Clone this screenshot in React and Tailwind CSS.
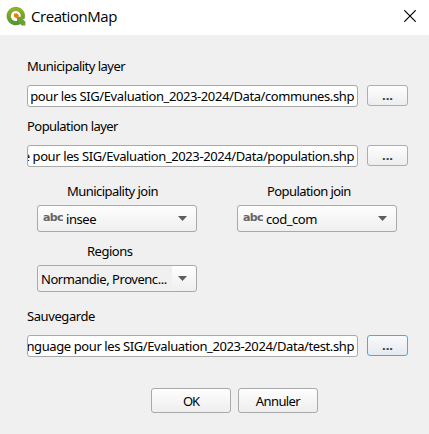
import React from "react";

function Logo() {
  return (
    <svg className="h-5 w-5 shrink-0" viewBox="0 0 20 20">
      <defs>
        <linearGradient id="leaf" x1="0" y1="0" x2="0" y2="1">
          <stop offset="0" stopColor="#93b023" />
          <stop offset="1" stopColor="#589632" />
        </linearGradient>
      </defs>
      <path d="M14.6 15.3 A7.1 7.1 0 1 1 16.9 9.6 Q16.9 11.2 16.2 12.6" fill="none" stroke="url(#leaf)" strokeWidth="4.3" />
      <path d="M11 10.8h3.4l5 5v3.6h-3.6l-4.8-4.9z" fill="#6d9f35" />
      <path d="M8 7.6h3.3l1.6 1.8v1.3h-1.6v1.6h-1.2L8 10.6z" fill="#ee7913" />
    </svg>
  );
}

function CloseIcon() {
  return (
    <svg className="h-3 w-3 text-black" viewBox="0 0 12 12" fill="none" stroke="currentColor" strokeWidth="1.2">
      <path d="M0.3 0.3l11.4 11.4M11.7 0.3L0.3 11.7" />
    </svg>
  );
}

function Label({ children, className = "" }) {
  return <div className={`h-4 whitespace-nowrap ${className}`}>{children}</div>;
}

function FileRow({ path, focused }) {
  return (
    <div className="flex items-start gap-[9px]">
      <div className="flex h-[22px] w-[331px] justify-end overflow-hidden rounded-[3px] border border-[#a9a9a9] bg-white pt-[2px] pr-[3px]">
        <span className="tracking-[-0.4px] whitespace-nowrap">{path}</span>
      </div>
      <button
        className={`flex h-[21px] w-[41px] justify-center rounded-[3px] border bg-linear-to-b pt-[1px] font-bold ${
          focused ? "border-[#4aa8f0] from-[#f9fafb] to-[#e5eaef]" : "border-[#adadad] from-[#fefefe] to-[#ededed]"
        }`}
      >
        <span className="text-[#303a42]">...</span>
      </button>
    </div>
  );
}

function Arrow() {
  return (
    <svg className="h-[5px] w-[9px]" viewBox="0 0 9 5">
      <path d="M0 0h9L4.5 5z" fill="#5c5c5c" />
    </svg>
  );
}

function Combo({ value, spacing }) {
  return (
    <div className="flex h-[27px] w-[160px] items-start rounded-[3px] border border-[#a9a9a9] bg-linear-to-b from-[#fefefe] to-[#efefef] pr-[9px] pl-[5px]">
      <span className="w-[23px] pt-[4px] font-['DejaVu_Sans'] text-[11px] leading-[16px] font-bold tracking-[-0.7px] text-[#666]">abc</span>
      <span className={`grow pt-[5px] ${spacing}`}>{value}</span>
      <div className="pt-[10px] leading-none"><Arrow /></div>
    </div>
  );
}

export default function App() {
  return (
    <div className="h-[434px] w-[429px] overflow-hidden bg-[#f0f0f0] font-['Noto_Sans',sans-serif] text-[13px] leading-[16px] text-black">
      <header className="flex h-[35px] items-start bg-white pt-[6px] pr-[13px] pl-[6px]">
        <Logo />
        <h1 className="ml-[5px] grow font-['Open_Sans',sans-serif] text-[15px] leading-[20px] tracking-[-0.43px]">CreationMap</h1>
        <div className="pt-[4px]"><CloseIcon /></div>
      </header>
      <main className="pt-[23px] pl-[27px]">
        <Label className="mb-[11px] tracking-[-0.52px]">Municipality layer</Label>
        <FileRow path="pour les SIG/Evaluation_2023-2024/Data/communes.shp" />
        <Label className="mt-[11px] mb-[11px] tracking-[-0.55px]">Population layer</Label>
        <FileRow path="e pour les SIG/Evaluation_2023-2024/Data/population.shp" />
        <div className="mt-[16px] ml-[10px] flex gap-[40px]">
          <div className="w-[160px]">
            <Label className="mb-[6px] pl-[30px] tracking-[-0.54px]">Municipality join</Label>
            <Combo value="insee" spacing="tracking-[-0.45px]" />
          </div>
          <div className="w-[160px]">
            <Label className="mb-[6px] pl-[30px] tracking-[-0.57px]">Population join</Label>
            <Combo value="cod_com" spacing="tracking-[-0.45px]" />
          </div>
        </div>
        <div className="mt-[11px] ml-[10px] w-[160px]">
          <Label className="mb-[6px] pl-[50px] tracking-[-0.5px]">Regions</Label>
          <div className="flex h-[27px] items-start rounded-[3px] border border-[#a9a9a9] bg-linear-to-b from-[#fefefe] to-[#efefef] pr-[9px] pl-[1px]">
            <div className="h-[24px] w-[133px] bg-[#f0f0f0] pt-[5px] pl-[2px] tracking-[-0.46px] whitespace-nowrap">Normandie, Provenc...</div>
            <div className="ml-auto pt-[10px] leading-none"><Arrow /></div>
          </div>
        </div>
        <Label className="mt-[16px] mb-[11px] tracking-[-0.42px]">Sauvegarde</Label>
        <FileRow path="nguage pour les SIG/Evaluation_2023-2024/Data/test.shp" focused />
        <div className="mt-[31px] ml-[124px] flex gap-[7px]">
          <button className="flex h-[25px] w-[80px] justify-center rounded-[3px] border border-[#a9a9a9] bg-linear-to-b from-[#fefefe] to-[#eeeeee] pt-[4px]">
            <span className="tracking-[-1.2px]">OK</span>
          </button>
          <button className="flex h-[25px] w-[80px] justify-center rounded-[3px] border border-[#a9a9a9] bg-linear-to-b from-[#fefefe] to-[#eeeeee] pt-[4px]">
            <span className="tracking-[-0.6px]">Annuler</span>
          </button>
        </div>
      </main>
    </div>
  );
}
